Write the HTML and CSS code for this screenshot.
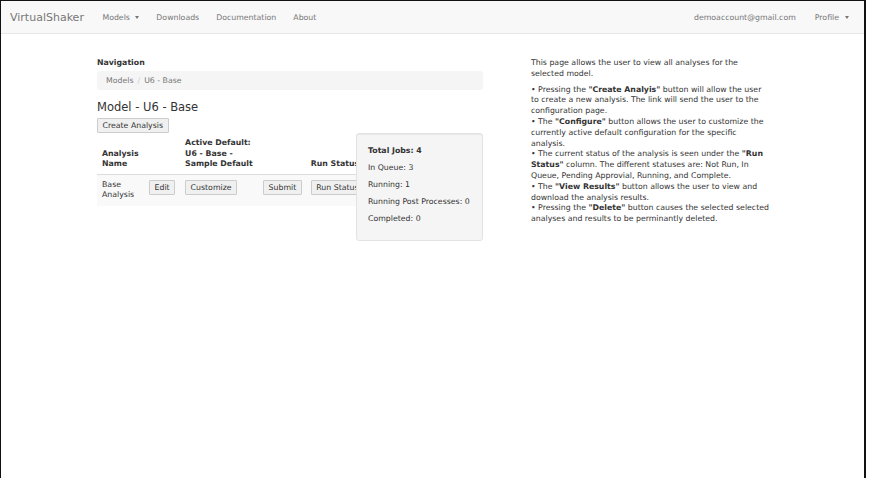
FILE: index.html
```html
<!DOCTYPE html>
<html>
  <head>
    <meta charset="utf-8">
    <title>VirtualShaker - Analyses</title>
    <link rel="stylesheet" href="styles.css">
  </head>
  <body>
    <div class="frame">
      <nav class="navbar">
        <a href="#" class="brand">VirtualShaker</a>
        <ul class="nav">
          <li><a href="#">Models <span class="caret"></span></a></li>
          <li><a href="#">Downloads</a></li>
          <li><a href="#">Documentation</a></li>
          <li><a href="#">About</a></li>
        </ul>
        <ul class="nav nav-right">
          <li><a href="#">demoaccount@gmail.com</a></li>
          <li><a href="#">Profile <span class="caret"></span></a></li>
        </ul>
      </nav>

      <div class="content">
        <div class="main">
          <div class="label">Navigation</div>
          <ol class="breadcrumb">
            <li><a href="#">Models</a></li>
            <li class="active">U6 - Base</li>
          </ol>

          <h3>Model - U6 - Base</h3>
          <button class="btn">Create Analysis</button>

          <div class="table-wrap">
            <table class="analyses">
              <thead>
                <tr>
                  <th class="col-name">Analysis<br>Name</th>
                  <th class="col-edit"></th>
                  <th class="col-default">Active Default:<br>U6 - Base -<br>Sample Default</th>
                  <th class="col-submit"></th>
                  <th class="col-status">Run Status</th>
                </tr>
              </thead>
              <tbody>
                <tr>
                  <td>Base<br>Analysis</td>
                  <td><button class="btn">Edit</button></td>
                  <td><button class="btn">Customize</button></td>
                  <td class="right"><button class="btn">Submit</button></td>
                  <td><button class="btn">Run Status</button></td>
                </tr>
              </tbody>
            </table>

            <div class="jobs">
              <p><b>Total Jobs: 4</b></p>
              <p>In Queue: 3</p>
              <p>Running: 1</p>
              <p>Running Post Processes: 0</p>
              <p>Completed: 0</p>
            </div>
          </div>
        </div>

        <div class="help">
          <p>This page allows the user to view all analyses for the<br>selected model.</p>
          <p>
            &bull; Pressing the <b>"Create Analyis"</b> button will allow the user<br>to create a new analysis. The link will send the user to the<br>configuration page.<br>
            &bull; The <b>"Configure"</b> button allows the user to customize the<br>currently active default configuration for the specific<br>analysis.<br>
            &bull; The current status of the analysis is seen under the <b>"Run<br>Status"</b> column. The different statuses are: Not Run, In<br>Queue, Pending Approvial, Running, and Complete.<br>
            &bull; The <b>"View Results"</b> button allows the user to view and<br>download the analysis results.<br>
            &bull; Pressing the <b>"Delete"</b> button causes the selected selected<br>analyses and results to be perminantly deleted.
          </p>
        </div>
      </div>
    </div>
  </body>
</html>
```

FILE: styles.css
```css
body, div, ul, ol, li, h3, p, table, th, td, button {margin:0;padding:0}

body {
  background-color: #fff;
  color: #333;
  font-family: 'DejaVu Sans', Verdana, sans-serif;
  font-size: 8px;
}

a {
  color: #777;
  text-decoration: none;
}

.frame {
  width: 863px;
  height: 477px;
  border-top: 1px solid #111;
  border-left: 1px solid #111;
  border-right: 2px solid #111;
  overflow: hidden;
}

/* NAVBAR */
.navbar {
  display: flex;
  align-items: center;
  height: 32px;
  background-color: #f8f8f8;
  border-bottom: 1px solid #e7e7e7;
}

.brand {
  font-size: 11px;
  padding: 0 10px 0 9px;
}

.nav {
  display: flex;
  list-style: none;
}

.nav a {
  display: block;
  padding: 0 8.5px;
  font-size: 7.8px;
}

.nav-right {
  margin-left: auto;
  margin-right: 7px;
}

.nav-right li + li {
  margin-left: 2px;
}

.caret {
  display: inline-block;
  width: 0;
  height: 0;
  margin-left: 3px;
  vertical-align: middle;
  border-top: 3px solid #777;
  border-left: 2.5px solid transparent;
  border-right: 2.5px solid transparent;
}

/* PAGE */
.content {
  display: flex;
  padding: 24px 0 0 96px;
  gap: 48px;
}

.main {
  width: 386px;
}

.label {
  font-weight: bold;
  font-size: 7.8px;
  margin-bottom: 4px;
}

.breadcrumb {
  display: flex;
  list-style: none;
  background-color: #f5f5f5;
  border-radius: 3px;
  padding: 5px 9px;
  font-size: 7.8px;
  color: #777;
}

.breadcrumb li + li:before {
  content: "/";
  color: #ccc;
  padding: 0 4px;
}

h3 {
  font-weight: normal;
  font-size: 11.5px;
  margin: 10px 0 4px;
}

.btn {
  font-family: inherit;
  font-size: 7.8px;
  color: #333;
  background-color: #f0f0f0;
  border: 1px solid #ccc;
  border-radius: 1px;
  padding: 1px 4.5px;
  line-height: 11px;
}

.table-wrap {
  position: relative;
  margin-top: 5px;
}

.analyses {
  border-collapse: collapse;
  width: 100%;
  font-size: 7.8px;
}

.analyses th {
  text-align: left;
  vertical-align: bottom;
  white-space: nowrap;
  padding: 0 5px 4px;
  line-height: 10.5px;
  border-bottom: 1px solid #ddd;
}

.analyses td {
  vertical-align: top;
  background-color: #f9f9f9;
  padding: 5px 5px 5px;
  line-height: 10.8px;
}

.analyses td.right {
  text-align: right;
  padding-right: 4px;
}

.col-name { width: 37px; }
.col-edit { width: 25px; }
.col-default { width: 68px; }
.col-submit { width: 35px; }

.jobs {
  position: absolute;
  top: -5px;
  right: 0;
  width: 103px;
  height: 84px;
  padding: 12px 11px 10px;
  background-color: #f5f5f5;
  border: 1px solid #e3e3e3;
  border-radius: 3px;
  box-shadow: inset 0 1px 1px rgba(0,0,0,0.05);
  font-size: 7.8px;
}

.jobs p {
  line-height: 10px;
  margin-bottom: 7px;
}

/* HELP */
.help {
  width: 260px;
  font-size: 7.8px;
  line-height: 10.8px;
}

.help p {
  margin-bottom: 5px;
}
```
